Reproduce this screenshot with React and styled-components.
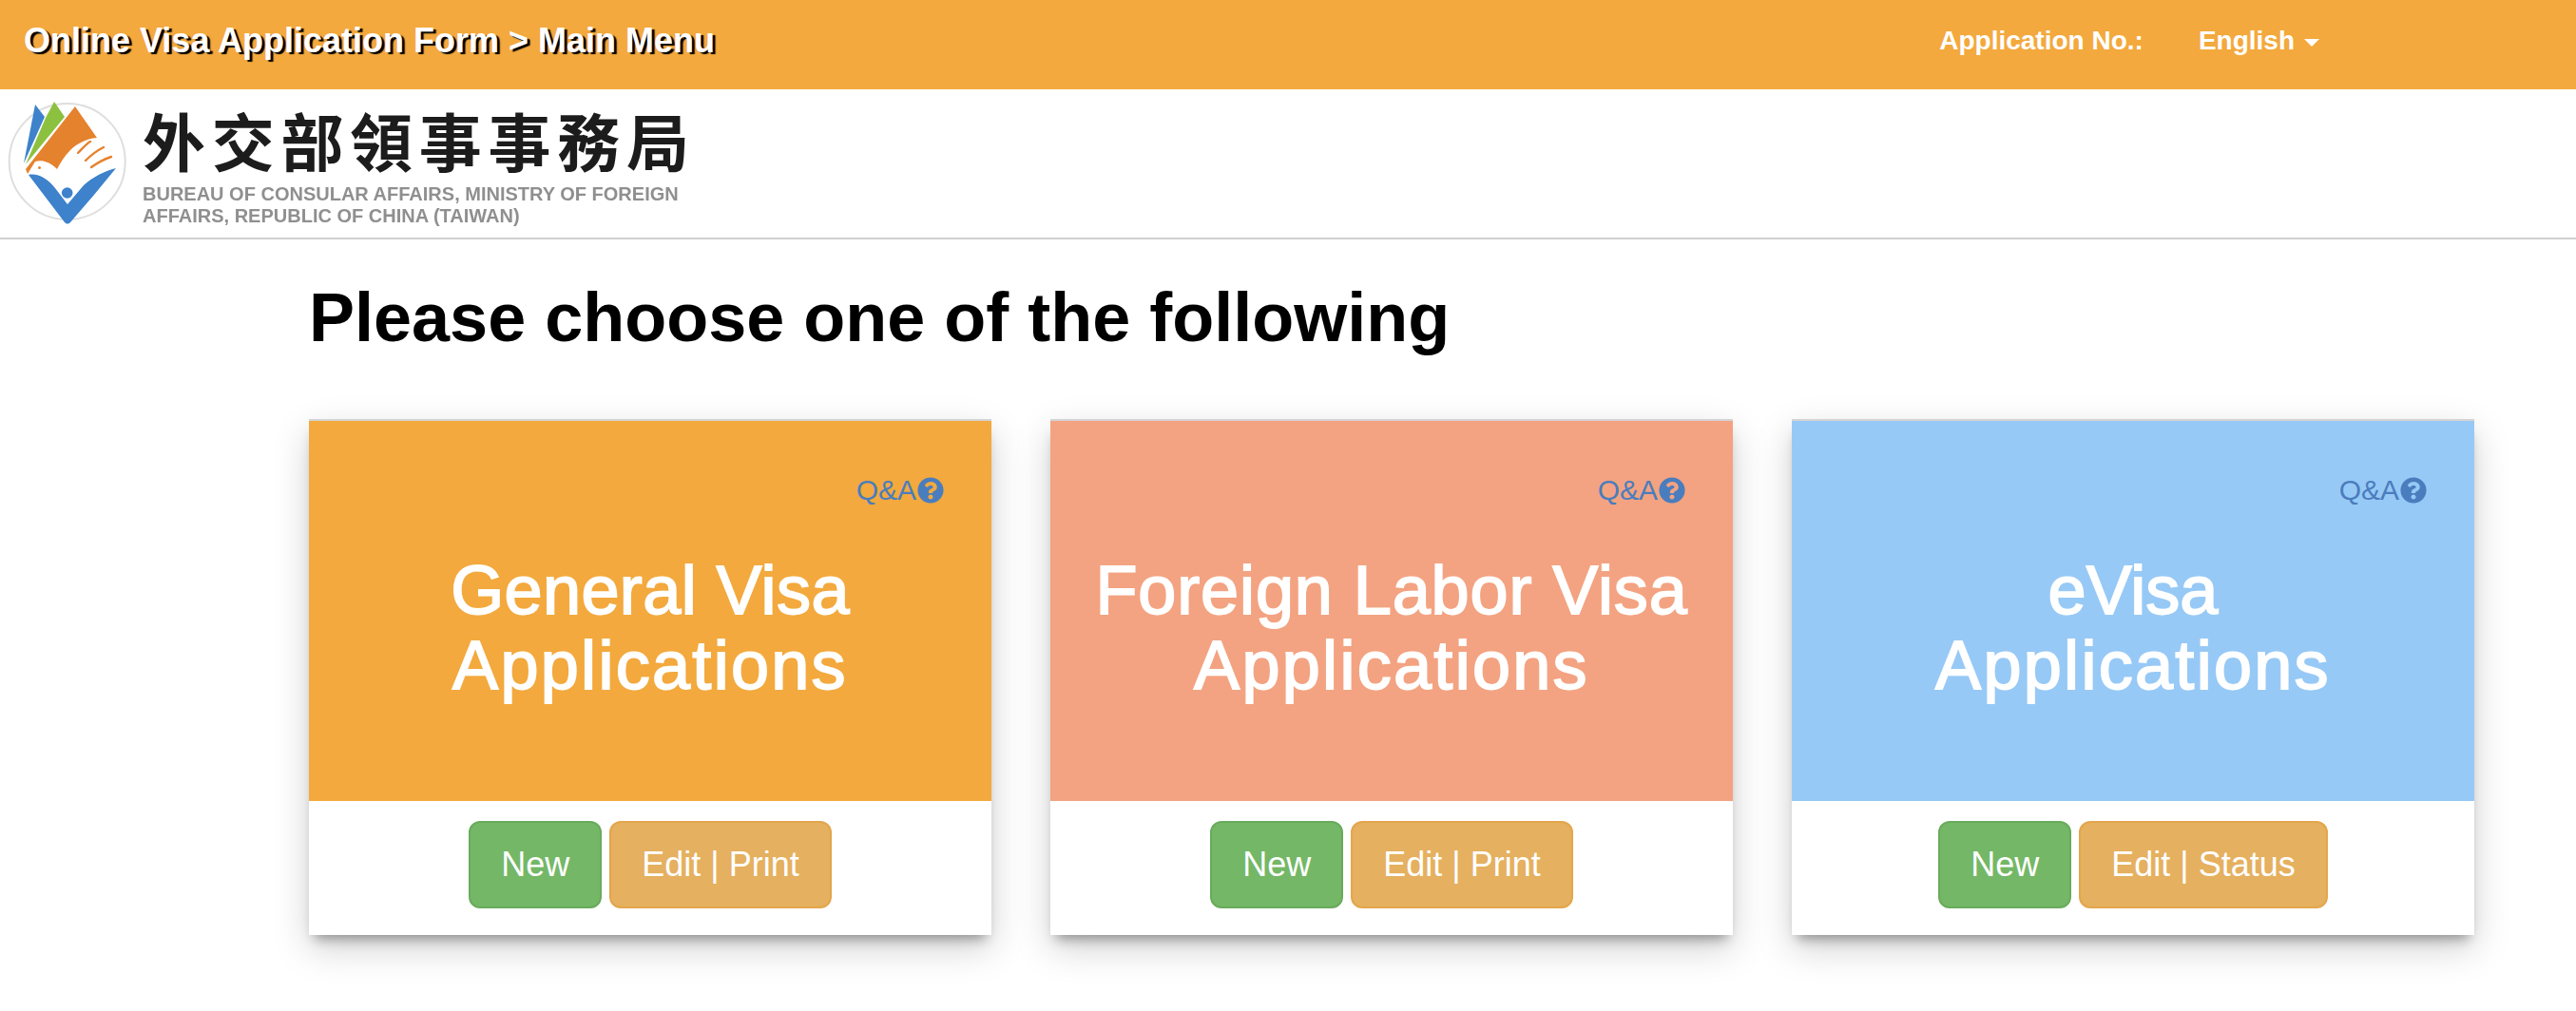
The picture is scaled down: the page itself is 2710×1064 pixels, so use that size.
import React from "react";
import styled, { createGlobalStyle } from "styled-components";
import { FaQuestionCircle } from "react-icons/fa";

const GlobalStyle = createGlobalStyle`
    html, body {
        margin: 0;
        background: #fff;
        font-family: "Liberation Sans", Arial, sans-serif;
    }
    #root {
        min-height: 1064px;
    }
`;

const TopBar = styled.header`
    height: 94px;
    box-sizing: border-box;
    background: #f3a93d;
    display: flex;
    align-items: center;
    padding: 0 270px 8px 25px;
    color: #fff;
    font-weight: bold;
`;

const Crumb = styled.div`
    font-size: 36px;
    text-shadow: 3px 2px 1px #000;
`;

const TopNav = styled.nav`
    margin-left: auto;
    display: flex;
    align-items: center;
    gap: 58px;
    font-size: 28px;
`;

const Language = styled.span`
    display: flex;
    align-items: center;
    gap: 10px;
`;

const Caret = styled.i`
    width: 0;
    height: 0;
    margin-top: 3px;
    border-left: 8px solid transparent;
    border-right: 8px solid transparent;
    border-top: 8px solid #fff;
`;

const Brand = styled.div`
    height: 158px;
    box-sizing: border-box;
    border-bottom: 2px solid #d0d0d0;
    display: flex;
`;

const BrandText = styled.div`
    width: 600px;
    filter: blur(0.5px);
`;

const BrandName = styled.div`
    font-family: "Noto Sans CJK TC", sans-serif;
    font-size: 66px;
    font-weight: 700;
    line-height: 66px;
    letter-spacing: 6.7px;
    margin-top: 19px;
    color: #1c1c1c;
`;

const BrandSub = styled.div`
    font-size: 20px;
    font-weight: bold;
    line-height: 23px;
    margin-top: 14px;
    color: #8f8f8f;
`;

const Main = styled.main`
    padding: 0 107px 0 325px;
`;

const Heading = styled.h1`
    font-size: 72px;
    line-height: 79px;
    font-weight: bold;
    color: #000;
    margin: 43px 0 67px;
`;

const CardGrid = styled.div`
    display: grid;
    grid-template-columns: repeat(3, 718px);
    gap: 62px;
`;

const Card = styled.section`
    box-sizing: border-box;
    height: 543px;
    background: #fff;
    border-top: 2px solid #d4d4d4;
    box-shadow: 0 10px 12px -6px rgba(0, 0, 0, 0.35), 0 14px 36px 0 rgba(0, 0, 0, 0.18);
    display: flex;
    flex-direction: column;
`;

const CardHead = styled.div`
    height: 400px;
    box-sizing: border-box;
    background: ${(p) => p.$bg};
    padding: 54px 50px 0;
`;

const QaLink = styled.a`
    display: flex;
    justify-content: flex-end;
    align-items: center;
    gap: 1px;
    color: #4a7dbd;
    font-size: 30px;
    line-height: 38px;
    svg {
        width: 28px;
        height: 28px;
    }
`;

const CardTitle = styled.h2`
    margin: 47px -40px 0;
    color: #fff;
    font-size: 72px;
    line-height: 79px;
    font-weight: normal;
    text-align: center;
    -webkit-text-stroke: 1.8px #fff;
`;

const TitleLine = styled.span`
    display: block;
    letter-spacing: ${(p) => p.$spacing}px;
`;

const CardFoot = styled.div`
    flex: 1;
    display: flex;
    justify-content: center;
    gap: 8px;
    padding-top: 21px;
`;

const Button = styled.a`
    box-sizing: border-box;
    height: 92px;
    padding: 0 32px;
    display: flex;
    align-items: center;
    border-radius: 12px;
    border: 2px solid ${(p) => (p.$green ? "#69ab5c" : "#e3a64c")};
    background: ${(p) => (p.$green ? "#74b767" : "#e5b05f")};
    color: #fff;
    font-size: 36px;
`;

const Logo = () => (
    <svg width="150" height="154" viewBox="0 4 150 154" style={{ flex: "none", filter: "blur(0.4px)" }}>
        <circle cx="70.7" cy="80" r="61" fill="none" stroke="#dedede" strokeWidth="2" />
        <path d="M37 20 L47 33 L25 82 Z" fill="#3d82cb" />
        <path d="M57 17 L68 33 L27 83 L48 34 Z" fill="#8cc13f" />
        <path
            d="M79 22 L102 55 C90 56 80 62 74 68 C68 74 63 82 60 88 C52 80 44 78 37 80 L29 93 L27 88 Z"
            fill="#e5822d"
        />
        <circle cx="41.5" cy="86.5" r="1.5" fill="#e5822d" />
        <g fill="none" stroke="#e5822d" strokeWidth="2.4" strokeLinecap="round">
            <path d="M82 71 C87 66 91 61 95 59" />
            <path d="M90 79 C96 73 103 68 109 65" />
            <path d="M96 86 C103 81 111 77 117 75" />
        </g>
        <path
            d="M30 94 C40 92 50 98 58 108 L71 125 L88 105 C98 96 110 90 122 87 L99 115 L74 144 Q71 147 68 144 Z"
            fill="#3d82cb"
        />
        <circle cx="70.7" cy="113" r="5.8" fill="#3d82cb" />
    </svg>
);

const cards = [
    { bg: "#f3a93d", title: "General Visa", spacing: 0.4, action: "Edit | Print" },
    { bg: "#f3a381", title: "Foreign Labor Visa", spacing: 0.9, action: "Edit | Print" },
    { bg: "#97c9f6", title: "eVisa", spacing: 0, action: "Edit | Status" },
];

const App = () => (
    <>
        <GlobalStyle />
        <TopBar>
            <Crumb>Online Visa Application Form &gt; Main Menu</Crumb>
            <TopNav>
                <span>Application No.:</span>
                <Language>
                    English
                    <Caret />
                </Language>
            </TopNav>
        </TopBar>
        <Brand>
            <Logo />
            <BrandText>
                <BrandName>外交部領事事務局</BrandName>
                <BrandSub>
                    BUREAU OF CONSULAR AFFAIRS, MINISTRY OF FOREIGN
                    <br />
                    AFFAIRS, REPUBLIC OF CHINA (TAIWAN)
                </BrandSub>
            </BrandText>
        </Brand>
        <Main>
            <Heading>Please choose one of the following</Heading>
            <CardGrid>
                {cards.map((card) => (
                    <Card key={card.title}>
                        <CardHead $bg={card.bg}>
                            <QaLink>
                                Q&amp;A
                                <FaQuestionCircle />
                            </QaLink>
                            <CardTitle>
                                <TitleLine $spacing={card.spacing}>{card.title}</TitleLine>
                                <TitleLine $spacing={2.3}>Applications</TitleLine>
                            </CardTitle>
                        </CardHead>
                        <CardFoot>
                            <Button $green>New</Button>
                            <Button>{card.action}</Button>
                        </CardFoot>
                    </Card>
                ))}
            </CardGrid>
        </Main>
    </>
);

export default App;
